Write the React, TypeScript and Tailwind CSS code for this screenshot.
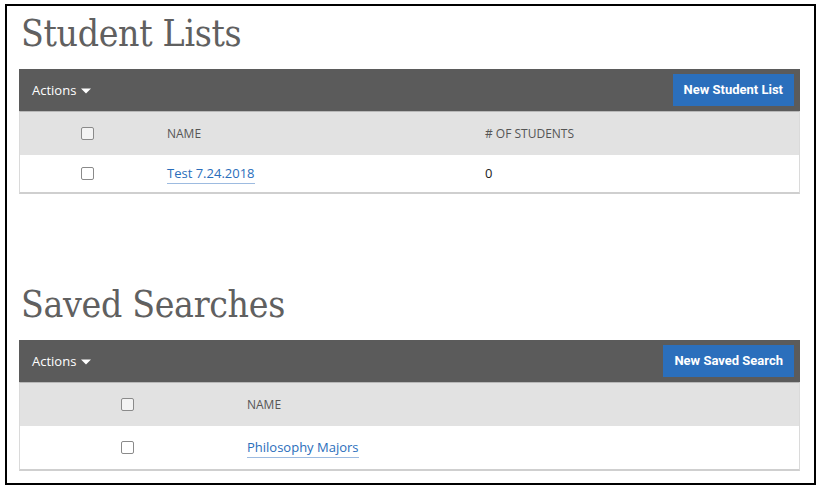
const slab = { fontFamily: "'DejaVu Serif Condensed', 'DejaVu Serif', serif", fontStretch: "condensed" as const };

const Checkbox = () => (
  <span className="inline-block w-[13px] h-[13px] rounded-[2px] border border-[#8a8a8a] bg-white/60" />
);

const Caret = () => (
  <svg width="10" height="6" viewBox="0 0 10 6" className="ml-[5px]">
    <path d="M0 0.5h10L5 5.5z" fill="#fff" />
  </svg>
);

type SectionProps = {
  title: string;
  button: string;
  boxWidth: string;
  nameWidth: string;
  countLabel?: string;
  row: { name: string; count?: string };
  rowHeight: string;
  titleGap: string;
};

const Section = ({ title, button, boxWidth, nameWidth, countLabel, row, rowHeight, titleGap }: SectionProps) => (
  <section>
    <h1
      className={`text-[37px] leading-[43px] text-[#606060] font-normal pl-[2px] tracking-[-0.3px] ${titleGap}`}
      style={slab}
    >
      {title}
    </h1>
    <div className="h-[42px] bg-[#5b5b5b] flex items-center justify-between pl-[13px] pr-[6px]">
      <button className="flex items-center text-white text-[13px] pt-[1px]">
        Actions
        <Caret />
      </button>
      <button
        className="h-[32px] px-[11px] bg-[#2b6fbc] text-white text-[13px] font-bold"
        style={{ fontFamily: "Roboto, sans-serif" }}
      >
        {button}
      </button>
    </div>
    <div className="border-t border-[#b8b8b8] border-x border-x-[#dadada] border-b-2 border-b-[#cfcfcf]">
      <div className="flex h-[43px] items-center bg-[#e2e2e2] text-[12px] text-[#555] uppercase">
        <div className={`${boxWidth} shrink-0 flex justify-center`}>
          <Checkbox />
        </div>
        <div className={`${nameWidth} pl-[12px]`}>Name</div>
        {countLabel && <div className="flex-1 pl-[12px]">{countLabel}</div>}
      </div>
      <div className={`flex ${rowHeight} items-center bg-white text-[13px]`}>
        <div className={`${boxWidth} shrink-0 flex justify-center`}>
          <Checkbox />
        </div>
        <div className={`${nameWidth} pl-[12px]`}>
          <a className="text-[#2a6ebb] border-b border-[#9dbbe0] pb-[1px]">{row.name}</a>
        </div>
        {row.count !== undefined && <div className="flex-1 pl-[12px] text-[#222]">{row.count}</div>}
      </div>
    </div>
  </section>
);

export default function App() {
  return (
    <div className="w-[822px] h-[491px] bg-white pt-[4px] pl-[5px]" style={{ fontFamily: "'Open Sans', sans-serif" }}>
      <div className="w-[811px] h-[481px] border-2 border-black pl-[12px] pr-[14px]">
        <Section
          title="Student Lists"
          button="New Student List"
          boxWidth="w-[135px]"
          nameWidth="w-[318px] shrink-0"
          countLabel="# of Students"
          row={{ name: "Test 7.24.2018", count: "0" }}
          rowHeight="h-[37px]"
          titleGap="mt-[6px] mb-[14px]"
        />
        <div className="h-[89px]" />
        <Section
          title="Saved Searches"
          button="New Saved Search"
          boxWidth="w-[215px]"
          nameWidth="flex-1"
          row={{ name: "Philosophy Majors" }}
          rowHeight="h-[43px]"
          titleGap="mb-[14px]"
        />
      </div>
    </div>
  );
}
